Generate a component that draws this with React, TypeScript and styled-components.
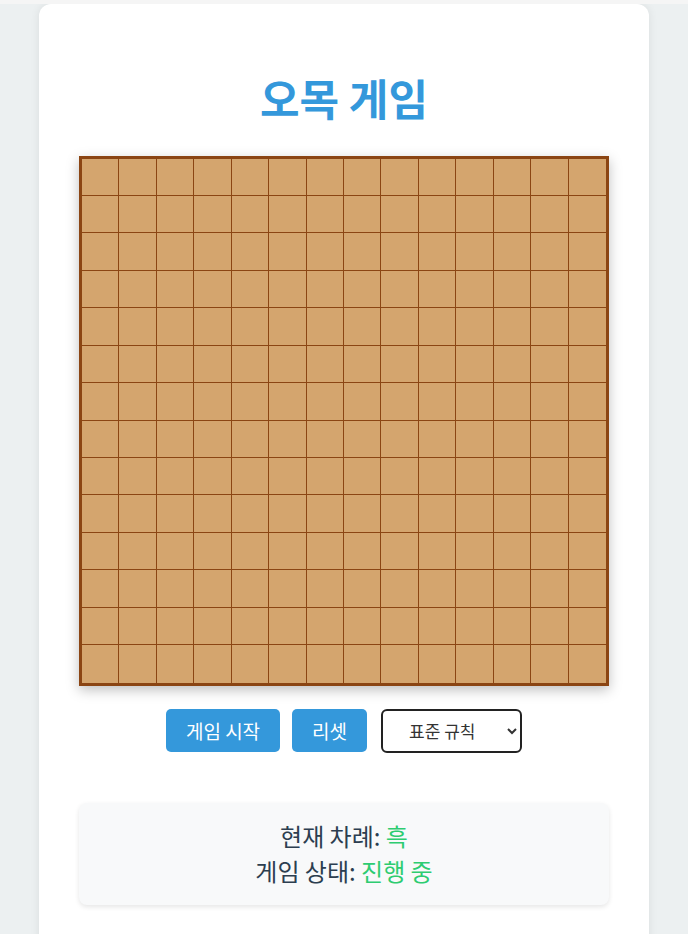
import React, { useState } from "react";
import styled, { createGlobalStyle } from "styled-components";

const SIZE = 14;

const GlobalStyle = createGlobalStyle`
  html {
    background: #f5f5f5;
  }
  body {
    margin: 4px 0 0;
    min-height: 100vh;
    background: #ecf0f1;
    font-family: "Noto Sans CJK KR", "Noto Sans", sans-serif;
    color: #2c3e50;
  }
`;

export default function App() {
  const [rule, setRule] = useState("standard");

  return (
    <>
      <GlobalStyle />
      <Card>
        <Title>오목 게임</Title>
        <Board>
          {Array.from({ length: SIZE * SIZE }).map((_, i) => (
            <Cell
              key={i}
              $lastCol={i % SIZE === SIZE - 1}
              $lastRow={i >= SIZE * (SIZE - 1)}
            />
          ))}
        </Board>
        <Controls>
          <Button>게임 시작</Button>
          <Button>리셋</Button>
          <RuleSelect value={rule} onChange={(e) => setRule(e.target.value)}>
            <option value="standard">표준 규칙</option>
            <option value="renju">렌주 규칙</option>
          </RuleSelect>
        </Controls>
        <Status>
          <StatusLine>
            현재 차례: <Value>흑</Value>
          </StatusLine>
          <StatusLine>
            게임 상태: <Value>진행 중</Value>
          </StatusLine>
        </Status>
      </Card>
    </>
  );
}

const Card = styled.div`
  width: 610px;
  box-sizing: border-box;
  margin: 0 auto;
  padding: 40px 40px 60px;
  background: #fff;
  border-radius: 12px;
  box-shadow: 0 0 10px rgba(0, 0, 0, 0.08);
  display: flex;
  flex-direction: column;
  align-items: center;
`;

const Title = styled.h1`
  margin: 24px 0 29.6px;
  font-size: 43px;
  font-weight: 700;
  line-height: 58px;
  color: #3498db;
  text-align: center;
`;

const Board = styled.div`
  width: 530px;
  height: 530px;
  box-sizing: border-box;
  border: 3px solid #8b4513;
  background: #d4a56e;
  display: grid;
  grid-template-columns: repeat(${SIZE}, 1fr);
  grid-template-rows: repeat(${SIZE}, 1fr);
  box-shadow: 0 4px 12px rgba(0, 0, 0, 0.25);
`;

const Cell = styled.div<{ $lastCol: boolean; $lastRow: boolean }>`
  border-right: ${(p) => (p.$lastCol ? "none" : "1px solid #8b4513")};
  border-bottom: ${(p) => (p.$lastRow ? "none" : "1px solid #8b4513")};
`;

const Controls = styled.div`
  margin-top: 23px;
  display: flex;
  align-items: center;
  justify-content: center;
  gap: 12px;
`;

const Button = styled.button`
  padding: 10px 20px;
  font-family: inherit;
  font-size: 19px;
  line-height: 23px;
  color: #fff;
  background: #3498db;
  border: none;
  border-radius: 5px;
  cursor: pointer;

  &:hover {
    background: #2980b9;
  }
`;

const RuleSelect = styled.select`
  margin-left: 2px;
  width: 141px;
  height: 44px;
  padding: 0 8px 0 22px;
  font-family: inherit;
  font-size: 17px;
  color: #333;
  background: #fff;
  border: 2px solid #222;
  border-radius: 6px;
`;

const Status = styled.div`
  align-self: stretch;
  margin-top: 50px;
  padding: 18px 20px 20px;
  background: #f8f9fa;
  border-radius: 8px;
  box-shadow: 0 2px 5px rgba(0, 0, 0, 0.1);
  display: flex;
  flex-direction: column;
  gap: 6px;
  text-align: center;
`;

const StatusLine = styled.p`
  margin: 0;
  font-size: 24px;
  line-height: 29px;
  color: #2c3e50;
`;

const Value = styled.span`
  color: #2ecc71;
`;
